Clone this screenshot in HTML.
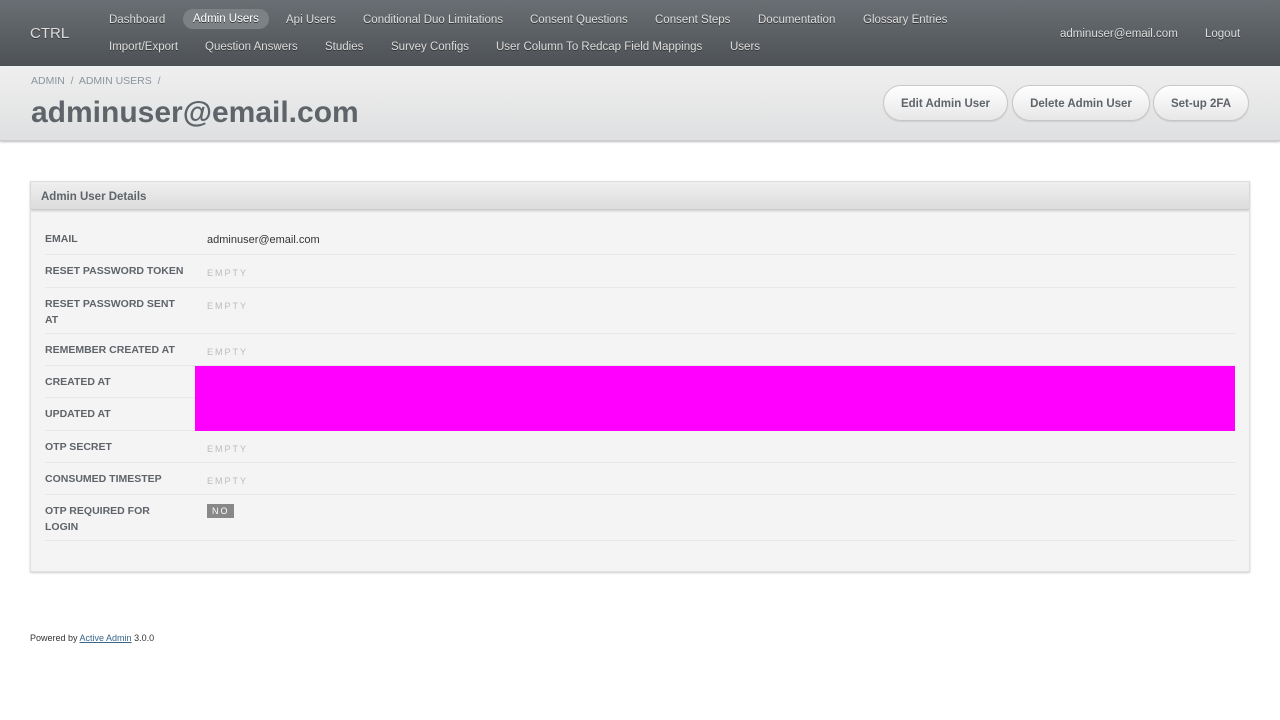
<!DOCTYPE html>
<html><head><style>
*{margin:0;padding:0;box-sizing:border-box}
body{width:1280px;height:720px;background:#fff;font-family:"Liberation Sans",Arial,sans-serif;position:relative;overflow:hidden}
.hdr{position:absolute;left:0;top:0;width:1280px;height:66px;background:linear-gradient(#6a6f74,#4e5256);border-bottom:1px solid #44484b}
.hdr span{position:absolute;font-size:11.5px;color:#ddd;text-shadow:0 1px 0 #333;white-space:nowrap}
.hdr .sel{background:#7c8185;border-radius:10px;padding:4px 10px;color:#fff}
.tb{position:absolute;left:0;top:66px;width:1280px;height:75px;background:linear-gradient(#efefef,#dfe0e1);border-bottom:1px solid #cdcdcd;box-shadow:0 1px 2px #bbb}
.bc{position:absolute;left:31px;top:75px;font-size:10.5px;color:#8a949e}
h2{position:absolute;left:31px;top:96px;font-size:30px;color:#5e6469;font-weight:bold}
.btn{position:absolute;top:85px;height:36px;border-radius:18px;border:1px solid #c7c7c7;background:linear-gradient(#fff,#e7e7e7);box-shadow:0 1px 1px #ccc;font-size:11.5px;font-weight:bold;color:#5e6469;display:flex;align-items:center;justify-content:center;padding-top:2px}
.panel{position:absolute;left:30px;top:181px;width:1220px;height:391px;background:#f4f4f4;border:1px solid #e0e0e0;box-shadow:0 1px 2px #ccc}
.ph{height:28px;background:linear-gradient(#efefef,#dcdcdc);border-bottom:1px solid #cdcdcd;font-size:11.5px;font-weight:bold;color:#5e6469;padding:9px 10px 0;box-shadow:0 1px 2px #ccc}
.row{position:absolute;left:14px;width:1191px;border-bottom:1px solid #e8e8e8}
.lab{position:absolute;left:0;font-size:10.5px;font-weight:bold;color:#5e6469;line-height:16px;width:145px}
.val{position:absolute;left:162px;font-size:11px;color:#323537}
.em{font-size:9px;letter-spacing:2px;color:#bbb}
</style></head><body>
<div class="hdr">
<span style="left:30px;top:25px;font-size:15px">CTRL</span>
<span style="left:109px;top:14px">Dashboard</span>
<span class="sel" style="left:183px;top:9px">Admin Users</span>
<span style="left:286px;top:14px">Api Users</span>
<span style="left:363px;top:14px">Conditional Duo Limitations</span>
<span style="left:530px;top:14px">Consent Questions</span>
<span style="left:655px;top:14px">Consent Steps</span>
<span style="left:758px;top:14px">Documentation</span>
<span style="left:863px;top:14px">Glossary Entries</span>
<span style="left:109px;top:41px">Import/Export</span>
<span style="left:205px;top:41px">Question Answers</span>
<span style="left:325px;top:41px">Studies</span>
<span style="left:391px;top:41px">Survey Configs</span>
<span style="left:496px;top:41px">User Column To Redcap Field Mappings</span>
<span style="left:730px;top:41px">Users</span>
<span style="left:1060px;top:28px">adminuser@email.com</span>
<span style="left:1205px;top:28px">Logout</span>
</div>
<div class="tb"></div>
<div class="bc">ADMIN &nbsp;/&nbsp; ADMIN USERS &nbsp;/</div>
<h2>adminuser@email.com</h2>
<div class="btn" style="left:883px;width:125px">Edit Admin User</div>
<div class="btn" style="left:1012px;width:138px">Delete Admin User</div>
<div class="btn" style="left:1153px;width:96px">Set-up 2FA</div>
<div class="panel">
<div class="ph">Admin User Details</div>
<div class="row" style="top:40px;height:33px"><div class="lab" style="top:9px">EMAIL</div><div class="val" style="top:12px">adminuser@email.com</div></div>
<div class="row" style="top:73px;height:33px"><div class="lab" style="top:8px;width:150px">RESET PASSWORD TOKEN</div><div class="val em" style="top:13px">EMPTY</div></div>
<div class="row" style="top:106px;height:46px"><div class="lab" style="top:8px">RESET PASSWORD SENT AT</div><div class="val em" style="top:13px">EMPTY</div></div>
<div class="row" style="top:152px;height:32px"><div class="lab" style="top:8px;width:150px">REMEMBER CREATED AT</div><div class="val em" style="top:13px">EMPTY</div></div>
<div class="row" style="top:184px;height:32px"><div class="lab" style="top:8px">CREATED AT</div></div>
<div class="row" style="top:216px;height:33px"><div class="lab" style="top:8px">UPDATED AT</div></div>
<div style="position:absolute;left:164px;top:184px;width:1040px;height:65px;background:#f0f"></div>
<div class="row" style="top:249px;height:32px"><div class="lab" style="top:8px">OTP SECRET</div><div class="val em" style="top:13px">EMPTY</div></div>
<div class="row" style="top:281px;height:32px"><div class="lab" style="top:8px">CONSUMED TIMESTEP</div><div class="val em" style="top:13px">EMPTY</div></div>
<div class="row" style="top:313px;height:46px"><div class="lab" style="top:8px;width:120px">OTP REQUIRED FOR LOGIN</div><div class="val" style="top:9px;background:#888;color:#fff;font-size:9px;letter-spacing:2px;padding:2px 4px 2px 5px">NO</div></div>
</div>
<div style="position:absolute;left:30px;top:633px;font-size:9px;color:#333">Powered by <span style="color:#38678b;text-decoration:underline">Active Admin</span> 3.0.0</div>
</body></html>
